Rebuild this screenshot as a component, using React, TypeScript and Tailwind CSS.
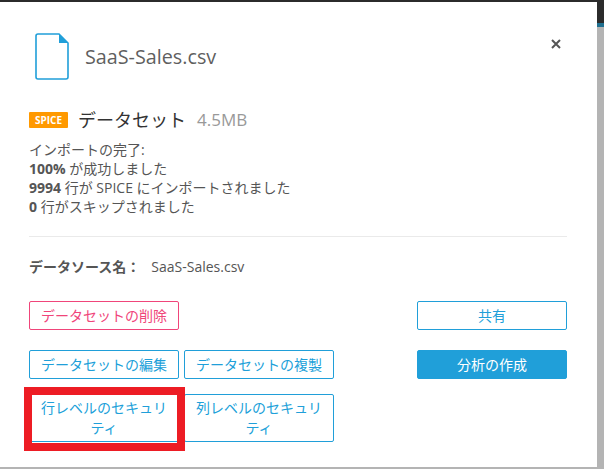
import * as React from 'react';

const font = "font-['Open_Sans','Noto_Sans_CJK_JP',sans-serif]";

function FileIcon() {
  return (
    <svg width="34" height="47" viewBox="0 0 34 47" fill="none" className="shrink-0">
      <path d="M3 1h21l9 9v34a2 2 0 0 1-2 2H3a2 2 0 0 1-2-2V3a2 2 0 0 1 2-2z" stroke="#209fd9" strokeWidth="1.6" />
      <path d="M24 1l9 9h-9z" fill="#209fd9" />
    </svg>
  );
}

function CloseIcon() {
  return (
    <svg width="10" height="10" viewBox="0 0 10 10" fill="none" className="shrink-0 mt-[6px]">
      <path d="M1 1l8 8M9 1l-8 8" stroke="#555" strokeWidth="2" />
    </svg>
  );
}

function Btn({ children, danger, primary, tall }: { children: React.ReactNode; danger?: boolean; primary?: boolean; tall?: boolean }) {
  const color = danger
    ? 'border-[#f0457a] text-[#f0457a] bg-white'
    : primary
      ? 'border-[#209fd9] bg-[#209fd9] text-white'
      : 'border-[#209fd9] text-[#209fd9] bg-white';
  return (
    <button className={`w-[150px] ${tall ? 'h-[48px] leading-[20px]' : 'h-[29px] leading-[24px]'} border rounded-[2px] text-[14px] text-center px-[8px] ${color}`}>
      {children}
    </button>
  );
}

export default function App() {
  return (
    <div className={`relative w-[604px] h-[469px] overflow-hidden bg-[#b4b4b4] ${font}`}>
      <div className="h-[2px] bg-[#2b2b2b]" />
      <div className="absolute left-[597px] top-0 w-[7px]">
        <div className="h-[23px] bg-[#2b2b2b]" />
        <div className="h-[4px] bg-[#1f6f8f]" />
      </div>
      <div className="w-[597px] h-[465px] bg-white text-[#555] pt-[31px] pl-[29px] pr-[30px]">
        <div className="flex items-start justify-between">
          <div className="flex items-center h-[47px] pl-[6px]">
            <FileIcon />
            <span className="ml-[16px] text-[19.75px] text-[#5f5f5f]">SaaS-Sales.csv</span>
          </div>
          <div className="mr-[6px]">
            <CloseIcon />
          </div>
        </div>
        <div className="flex items-center mt-[28px] h-[24px]">
          <span className="w-[39px] h-[16px] bg-[#ff9900] rounded-[1px] text-white text-[10px] font-bold flex items-center justify-center">SPICE</span>
          <span className="ml-[10px] text-[18px] text-[#333]">データセット</span>
          <span className="ml-[11px] text-[17px] text-[#999]">4.5MB</span>
        </div>
        <div className="mt-[8px] text-[14px] leading-[19px] text-[#555]">
          <div>インポートの完了:</div>
          <div><b>100%</b> が成功しました</div>
          <div><b>9994</b> 行が SPICE にインポートされました</div>
          <div><b>0</b> 行がスキップされました</div>
        </div>
        <div className="mt-[20px] border-t border-[#eaeaea]" />
        <div className="mt-[20px] flex items-center text-[14px] leading-[19px]">
          <b>データソース名：</b>
          <span className="ml-[11px]">SaaS-Sales.csv</span>
        </div>
        <div className="mt-[25px] flex justify-between">
          <Btn danger>データセットの削除</Btn>
          <Btn>共有</Btn>
        </div>
        <div className="mt-[20px] flex justify-between">
          <div className="flex gap-[5px]">
            <Btn>データセットの編集</Btn>
            <Btn>データセットの複製</Btn>
          </div>
          <Btn primary>分析の作成</Btn>
        </div>
        <div className="mt-[15px] flex gap-[5px]">
          <div className="relative">
            <Btn tall>行レベルのセキュリティ</Btn>
            <div className="absolute left-[-5px] top-[-7px] w-[161px] h-[64px] border-[8px] border-[#ed1c24] pointer-events-none" />
          </div>
          <Btn tall>列レベルのセキュリティ</Btn>
        </div>
      </div>
    </div>
  );
}
